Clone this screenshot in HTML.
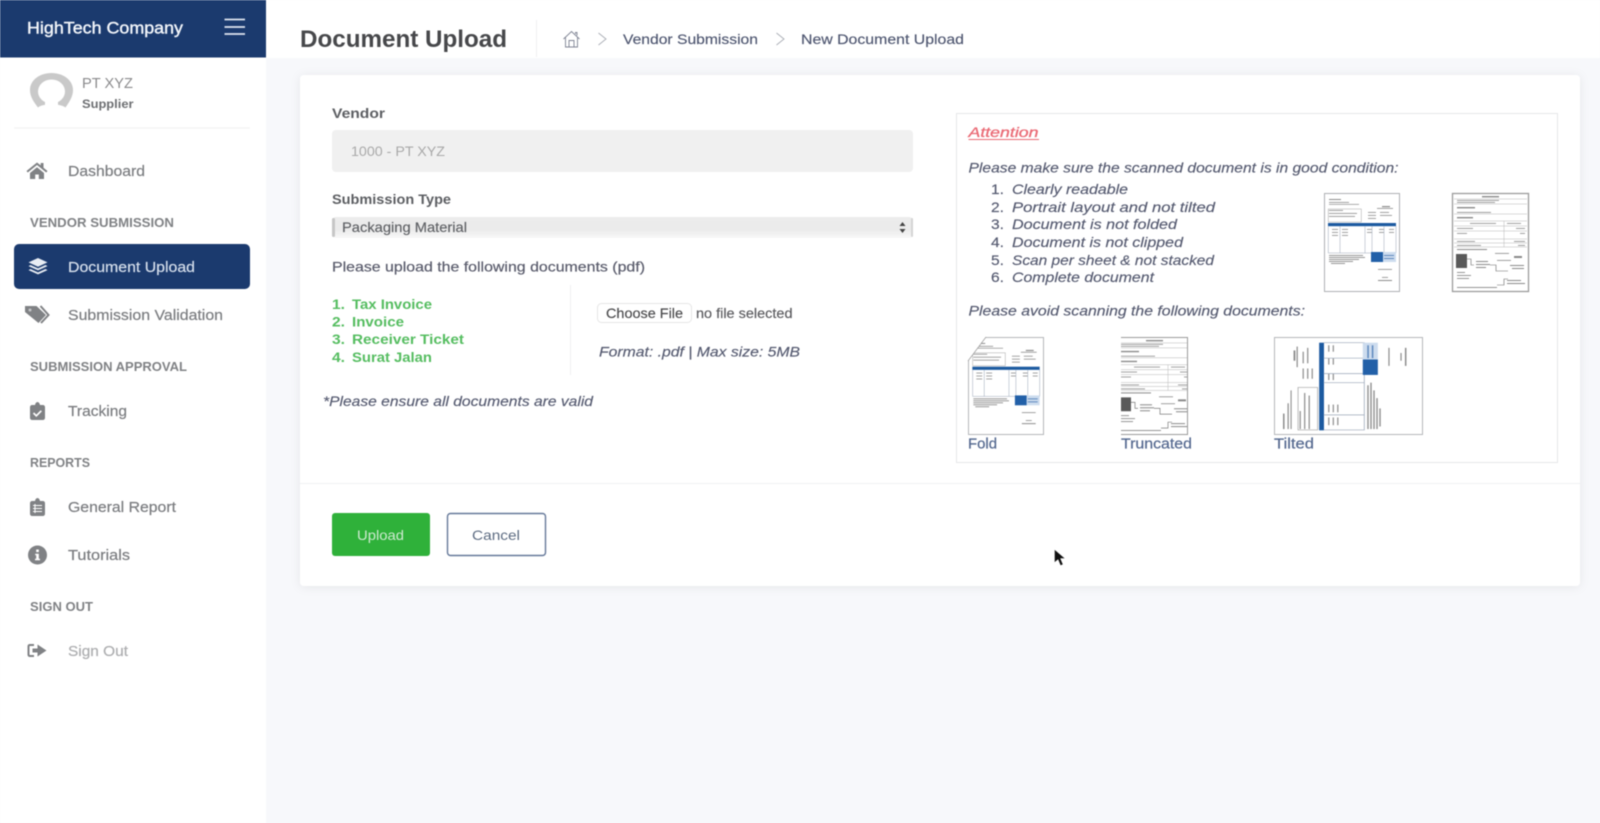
<!DOCTYPE html>
<html lang="en"><head><meta charset="utf-8"><title>Document Upload</title>
<style>
html,body{margin:0;padding:0;background:#f7f8fb;width:1600px;height:823px;overflow:hidden}
svg{display:block;filter:blur(.5px)}
svg svg{filter:none}
text{font-family:"Liberation Sans",sans-serif;font-size:14px;white-space:pre}
.nav{font-size:14.5px;fill:#7b7d80;stroke:#7b7d80;stroke-width:.2}
.sec{font-size:12.5px;font-weight:bold;fill:#808285}
.lab{font-weight:bold;font-size:13.5px;fill:#5d5f63}
.it{font-style:italic;fill:#555a70;font-size:14px;stroke:#555a70;stroke-width:.15}
.num{fill:#555a70;font-size:14px;stroke:#555a70;stroke-width:.15}
.gr{font-weight:bold;fill:#55bd60;font-size:13.5px}
.cr{font-size:14px;fill:#4e5670;stroke:#4e5670;stroke-width:.15}
.cap{font-size:14.5px;fill:#54688f;stroke:#54688f;stroke-width:.2}
.ic{fill:#808285}
</style></head>
<body>
<svg xmlns="http://www.w3.org/2000/svg" width="1600" height="823" viewBox="0 0 1600 823">
<defs>
<filter id="sh" x="-5%" y="-10%" width="110%" height="120%"><feDropShadow dx="0" dy="1" stdDeviation="5" flood-color="#000" flood-opacity=".07"/></filter>
<filter id="b" x="-3%" y="-3%" width="106%" height="106%"><feGaussianBlur stdDeviation=".3"/></filter>
<symbol id="inv" viewBox="0 0 76 99" overflow="visible">
<g fill="#8c8c8c">
<rect x="5" y="6" width="12" height="1"/><rect x="5" y="9" width="20" height=".8"/><rect x="5" y="11" width="30" height=".7"/>
<rect x="58" y="13" width="8" height="1.2"/><rect x="53" y="15" width="16" height=".8"/>
<rect x="5" y="17" width="14" height=".8"/><rect x="5" y="20" width="28" height=".8"/><rect x="5" y="23" width="26" height=".8"/>
<rect x="44" y="19" width="8" height=".8"/><rect x="56" y="19" width="9" height=".8"/><rect x="44" y="22" width="8" height=".8"/><rect x="56" y="22" width="12" height=".8"/><rect x="44" y="25" width="8" height=".8"/>
<rect x="8" y="36" width="6" height=".8"/><rect x="8" y="39" width="6" height=".8"/><rect x="8" y="42" width="6" height=".8"/><rect x="18" y="36" width="6" height=".8"/><rect x="18" y="39" width="6" height=".8"/><rect x="18" y="42" width="6" height=".8"/>
<rect x="43" y="36" width="5" height=".8"/><rect x="43" y="39" width="5" height=".8"/><rect x="55" y="36" width="5" height=".8"/><rect x="55" y="39" width="5" height=".8"/><rect x="65" y="36" width="5" height=".8"/><rect x="65" y="39" width="5" height=".8"/>
<rect x="5" y="62" width="34" height=".9"/><rect x="5" y="64" width="36" height=".9"/><rect x="5" y="66" width="30" height=".9"/><rect x="5" y="68" width="24" height=".9"/><rect x="7" y="70" width="14" height=".9"/>
<rect x="54" y="76" width="14" height=".8"/><rect x="58" y="84" width="6" height=".8"/><rect x="54" y="87" width="14" height="1"/>
</g>
<rect x="4" y="30" width="68" height="3.2" fill="#1f5aa0"/>
<rect x="4.3" y="16" width="33" height="13" fill="none" stroke="#a5a5a5" stroke-width=".5"/>
<path d="M4.3 33V60H72V33M16 33V60M41 33V60M48 33V60M60 33V60" fill="none" stroke="#9aa6b8" stroke-width=".5"/>
<rect x="47" y="59" width="12" height="10" fill="#2260a8"/><rect x="59" y="59" width="13" height="10" fill="#cddcee"/>
<rect x="60" y="62" width="10" height="1" fill="#5d88bd"/><rect x="60" y="65" width="10" height="1" fill="#5d88bd"/>
</symbol>
<symbol id="frm" viewBox="0 0 77 99" overflow="visible">
<g fill="#8a8a8a">
<rect x="30" y="3" width="17" height="1.4"/><rect x="5" y="7" width="42" height=".8"/><rect x="5" y="9" width="38" height=".8"/>
<rect x="5" y="14" width="18" height="1.4"/><rect x="5" y="19" width="34" height=".8"/><rect x="5" y="24" width="16" height="1.4"/>
<rect x="18" y="30" width="26" height=".8"/><rect x="55" y="30" width="14" height=".8"/>
<rect x="5" y="35" width="16" height=".8"/><rect x="64" y="35" width="9" height=".8"/>
<rect x="5" y="40" width="10" height=".8"/><rect x="68" y="40" width="5" height=".8"/><rect x="5" y="48" width="18" height=".8"/><rect x="62" y="48" width="11" height=".8"/><rect x="5" y="52" width="24" height=".8"/><rect x="66" y="52" width="7" height=".8"/>
<rect x="5" y="56" width="30" height="1"/>
<rect x="43" y="60" width="14" height=".8"/><rect x="62" y="63" width="8" height="2"/><rect x="45" y="67" width="14" height=".8"/><rect x="58" y="72" width="14" height="1"/><rect x="60" y="75" width="12" height="1"/>
<rect x="24" y="68" width="12" height="1"/><rect x="24" y="71" width="14" height="1"/><rect x="24" y="74" width="10" height="1"/>
<rect x="5" y="79" width="8" height=".9"/><rect x="5" y="82" width="14" height=".9"/><rect x="5" y="85" width="12" height=".9"/>
<rect x="55" y="87" width="14" height="1"/><rect x="55" y="90" width="18" height="1"/><rect x="5" y="94" width="40" height=".9"/>
</g>
<rect x="4" y="61" width="11" height="14" fill="#5a5a5a"/>
<path d="M2 6H75M2 11H75M2 21H75M2 28H75M2 33H75M2 38H75M2 46H75M2 50H75M2 54H75M52 28V54" stroke="#b5b5b5" stroke-width=".5" fill="none"/>
<path d="M15 66H19V72H22M38 72H44V78H56M45 92H52V86H56" stroke="#666" stroke-width=".6" fill="none"/>
</symbol>
</defs>

<!-- backgrounds -->
<rect width="1600" height="823" fill="#f7f8fb"/>
<rect width="266" height="823" fill="#fff"/>
<rect x="266" width="1334" height="58" fill="#fff"/>
<rect width="266" height="57.5" fill="#1b3a6e"/>

<!-- brand -->
<text x="27" y="33.5" textLength="156" lengthAdjust="spacingAndGlyphs" fill="#f2f5fa" stroke="#f2f5fa" stroke-width=".4" style="font-size:16.5px">HighTech Company</text>
<path d="M224.500 19.500H245M224.500 27H245M224.500 34H245" stroke="#dfe5ef" stroke-width="1.700" fill="none"/>

<!-- user -->
<path fill="#c9c9c9" d="M38 107.500C33 101 30 96 30 90C30 80 40 73 51.500 73C63 73 73 80 73 90C73 96 70 101 65.500 107.500C62 105 58 104.500 51.500 104.500C45 104.500 41 105 38 107.500Z"/>
<ellipse cx="51.500" cy="91.500" rx="13.500" ry="12" fill="#fff"/>
<rect x="45" y="101" width="13" height="5" fill="#fff"/>
<text x="82" y="88" textLength="51" lengthAdjust="spacingAndGlyphs" style="font-size:14.500px" fill="#8b8b8d">PT XYZ</text>
<text x="82" y="108" textLength="51.500" lengthAdjust="spacingAndGlyphs" style="font-size:12px;font-weight:bold" fill="#6d6f72">Supplier</text>
<rect x="14" y="127.500" width="236" height="1" fill="#f1f1f1"/>

<!-- nav -->
<path class="ic" d="M37 162.500L26.500 171l1.300 1.500L37 165l9.200 7.500 1.300-1.500-4-3.300V163h-2.800v2.400zM30 173v6h5.200v-4.500h3.600V179H44v-6l-7-5.800z"/>
<text class="nav" x="68" y="176" textLength="77" lengthAdjust="spacingAndGlyphs">Dashboard</text>
<text class="sec" x="30" y="227" textLength="144" lengthAdjust="spacingAndGlyphs">VENDOR SUBMISSION</text>

<rect x="14" y="244" width="236" height="45" rx="5" fill="#1b3a6e"/>
<path fill="#e8edf4" d="M38 258l9.500 4.400-9.500 4.400-9.500-4.400zM30.500 265l7.500 3.400 7.500-3.400 2 1.100-9.500 4.300-9.500-4.300zM30.500 269l7.500 3.400 7.500-3.400 2 1.100-9.500 4.300-9.500-4.300z"/>
<text x="68" y="272" textLength="127" lengthAdjust="spacingAndGlyphs" style="font-size:14.500px" fill="#d6dfec" stroke="#d6dfec" stroke-width=".2">Document Upload</text>

<path class="ic" d="M25 306h11.500l9.500 9-7.500 8-13.500-11z"/><circle cx="30" cy="310" r="1.500" fill="#c4c5c7"/><path d="M40.500 306l8 9-7.500 8" fill="none" stroke="#808285" stroke-width="2"/>
<text class="nav" x="68" y="320" textLength="155" lengthAdjust="spacingAndGlyphs">Submission Validation</text>
<text class="sec" x="30" y="371" textLength="157" lengthAdjust="spacingAndGlyphs">SUBMISSION APPROVAL</text>

<path class="ic" d="M32 405h3c.3-2 1.500-3 2.500-3s2.200 1 2.500 3h3c1 0 2 1 2 2v11c0 1-1 2-2 2H32c-1 0-2-1-2-2v-11c0-1 1-2 2-2z"/><path d="M33.500 413l2.800 2.800 5-5" stroke="#fff" stroke-width="1.700" fill="none"/>
<text class="nav" x="68" y="416" textLength="59" lengthAdjust="spacingAndGlyphs">Tracking</text>
<text class="sec" x="30" y="467" textLength="60" lengthAdjust="spacingAndGlyphs">REPORTS</text>

<path class="ic" d="M32 501h3c.3-2 1.500-3 2.500-3s2.200 1 2.500 3h3c1 0 2 1 2 2v11c0 1-1 2-2 2H32c-1 0-2-1-2-2v-11c0-1 1-2 2-2z"/><path d="M33 505.500h9M33 508.500h9M33 511.500h9M35 504v9" stroke="#fff" stroke-width="1" fill="none"/>
<text class="nav" x="68" y="512" textLength="108" lengthAdjust="spacingAndGlyphs">General Report</text>

<circle class="ic" cx="37.500" cy="555" r="9.500"/><rect x="36.200" y="549.500" width="2.600" height="2.600" fill="#fff"/><path d="M35.200 553.800h3.600v5h1.200v1.500h-5v-1.500h1.200v-3.500h-1z" fill="#fff"/>
<text class="nav" x="68" y="560" textLength="62" lengthAdjust="spacingAndGlyphs">Tutorials</text>
<text class="sec" x="30" y="611" textLength="63" lengthAdjust="spacingAndGlyphs">SIGN OUT</text>

<path d="M34 645h-4c-1 0-1.500.6-1.500 1.500v8c0 .9.5 1.500 1.500 1.500h4" fill="none" stroke="#808285" stroke-width="2"/><path class="ic" d="M32.500 648.500h5V644.500l9 6-9 6v-4h-5z"/>
<text class="nav" x="68" y="656" textLength="60" lengthAdjust="spacingAndGlyphs" style="fill:#adaeb0;stroke:#adaeb0">Sign Out</text>

<!-- topbar -->
<text x="300" y="47" textLength="207" lengthAdjust="spacingAndGlyphs" style="font-size:24px;font-weight:bold" fill="#47484b">Document Upload</text>
<rect x="536" y="20" width="1" height="37" fill="#f0f0f2"/>
<path d="M563.500 39L571.500 31.500 579.500 39M565.500 37.500V47H577.500V37.500M569 47V40.500H574V47M575.500 34V32.500H577V35.500" fill="none" stroke="#7f8494" stroke-width=".9"/>
<path d="M598.500 33L606 39 598.500 45" fill="none" stroke="#a8acb4" stroke-width=".9"/>
<text class="cr" x="623" y="44" textLength="135" lengthAdjust="spacingAndGlyphs">Vendor Submission</text>
<path d="M776.500 33L784 39 776.500 45" fill="none" stroke="#a8acb4" stroke-width=".9"/>
<text class="cr" x="801" y="44" textLength="163" lengthAdjust="spacingAndGlyphs">New Document Upload</text>

<!-- card -->
<rect x="300" y="75" width="1280" height="511" rx="4" fill="#fff" filter="url(#sh)"/>
<rect x="300" y="483" width="1280" height="1" fill="#f0f1f3"/>

<text class="lab" x="332" y="118" textLength="53" lengthAdjust="spacingAndGlyphs">Vendor</text>
<rect x="332" y="130" width="581" height="42" rx="4" fill="#f0f0f0"/>
<text x="351" y="156" textLength="94" lengthAdjust="spacingAndGlyphs" fill="#a9a9a9">1000 - PT XYZ</text>

<text class="lab" x="332" y="204" textLength="119" lengthAdjust="spacingAndGlyphs">Submission Type</text>
<linearGradient id="sel" x1="0" y1="0" x2="0" y2="1"><stop offset="0" stop-color="#ececec"/><stop offset=".6" stop-color="#ebebeb"/><stop offset="1" stop-color="#f8f8f8"/></linearGradient>
<rect x="332" y="217" width="581" height="21" rx="4" fill="url(#sel)"/>
<rect x="332" y="218" width="3" height="19" rx="1.500" fill="#c6c6c6"/>
<rect x="911" y="218" width="2" height="19" rx="1" fill="#d4d4d4"/>
<text x="342" y="232" textLength="125" lengthAdjust="spacingAndGlyphs" fill="#5f6165" stroke="#5f6165" stroke-width=".15">Packaging Material</text>
<path d="M902.500 222l3 4h-6zM902.500 233l3-4h-6z" fill="#444"/>

<text x="332" y="271.500" textLength="313" lengthAdjust="spacingAndGlyphs" fill="#5a5c6c" stroke="#5a5c6c" stroke-width=".2">Please upload the following documents (pdf)</text>

<text class="gr" x="332" y="309" textLength="13" lengthAdjust="spacingAndGlyphs">1.</text><text class="gr" x="352" y="309" textLength="80" lengthAdjust="spacingAndGlyphs">Tax Invoice</text>
<text class="gr" x="332" y="326.500" textLength="13" lengthAdjust="spacingAndGlyphs">2.</text><text class="gr" x="352" y="326.500" textLength="52" lengthAdjust="spacingAndGlyphs">Invoice</text>
<text class="gr" x="332" y="344" textLength="13" lengthAdjust="spacingAndGlyphs">3.</text><text class="gr" x="352" y="344" textLength="112" lengthAdjust="spacingAndGlyphs">Receiver Ticket</text>
<text class="gr" x="332" y="362" textLength="13" lengthAdjust="spacingAndGlyphs">4.</text><text class="gr" x="352" y="362" textLength="80" lengthAdjust="spacingAndGlyphs">Surat Jalan</text>
<rect x="570" y="285" width="1" height="90" fill="#f0f0f2"/>

<rect x="597.500" y="303.500" width="94" height="19" rx="4" fill="#fff" stroke="#e6e6e6"/>
<text x="606" y="318" textLength="77" lengthAdjust="spacingAndGlyphs" fill="#4a4a4c" stroke="#4a4a4c" stroke-width=".15">Choose File</text>
<text x="696" y="318" textLength="96.500" lengthAdjust="spacingAndGlyphs" fill="#5a5a5e" stroke="#5a5a5e" stroke-width=".15">no file selected</text>
<text class="it" x="599" y="356.500" textLength="201" lengthAdjust="spacingAndGlyphs">Format: .pdf | Max size: 5MB</text>
<text class="it" x="323" y="406" textLength="270" lengthAdjust="spacingAndGlyphs">*Please ensure all documents are valid</text>

<rect x="332" y="513" width="98" height="43" rx="3" fill="#2fb13a"/>
<text x="357" y="540" textLength="47" lengthAdjust="spacingAndGlyphs" fill="#cdeacf">Upload</text>
<rect x="447.500" y="513.500" width="98" height="42" rx="3" fill="#fff" stroke="#66799a" stroke-width="1.400"/>
<text x="472" y="540" textLength="48" lengthAdjust="spacingAndGlyphs" fill="#5d6c82">Cancel</text>

<!-- attention -->
<rect x="956.500" y="113.500" width="601" height="349" fill="#fff" stroke="#e6e7e9"/>
<text x="968.500" y="137" textLength="70" lengthAdjust="spacingAndGlyphs" style="font-style:italic;font-size:14px" fill="#ea6a75" stroke="#ea6a75" stroke-width=".3">Attention</text>
<rect x="968.500" y="139" width="70.500" height="1" fill="#ea6a75"/>
<text class="it" x="968.500" y="172.500" textLength="430" lengthAdjust="spacingAndGlyphs">Please make sure the scanned document is in good condition:</text>
<text class="num" x="991" y="194" textLength="13" lengthAdjust="spacingAndGlyphs">1.</text><text class="it" x="1012" y="194" textLength="116" lengthAdjust="spacingAndGlyphs">Clearly readable</text>
<text class="num" x="991" y="212" textLength="13" lengthAdjust="spacingAndGlyphs">2.</text><text class="it" x="1012" y="212" textLength="203" lengthAdjust="spacingAndGlyphs">Portrait layout and not tilted</text>
<text class="num" x="991" y="229" textLength="13" lengthAdjust="spacingAndGlyphs">3.</text><text class="it" x="1012" y="229" textLength="165" lengthAdjust="spacingAndGlyphs">Document is not folded</text>
<text class="num" x="991" y="247" textLength="13" lengthAdjust="spacingAndGlyphs">4.</text><text class="it" x="1012" y="247" textLength="171" lengthAdjust="spacingAndGlyphs">Document is not clipped</text>
<text class="num" x="991" y="265" textLength="13" lengthAdjust="spacingAndGlyphs">5.</text><text class="it" x="1012" y="265" textLength="202" lengthAdjust="spacingAndGlyphs">Scan per sheet &amp; not stacked</text>
<text class="num" x="991" y="282" textLength="13" lengthAdjust="spacingAndGlyphs">6.</text><text class="it" x="1012" y="282" textLength="142" lengthAdjust="spacingAndGlyphs">Complete document</text>
<text class="it" x="968.500" y="315.500" textLength="336.500" lengthAdjust="spacingAndGlyphs">Please avoid scanning the following documents:</text>

<!-- good samples -->
<g filter="url(#b)">
<rect x="1324.500" y="193.500" width="75" height="98" fill="#fff" stroke="#aeb0b3"/>
<use href="#inv" x="1324" y="193" width="76" height="99"/>
<rect x="1452.500" y="193.500" width="76" height="98" fill="#fff" stroke="#9b9b9b" stroke-width="1.300"/>
<use href="#frm" x="1452" y="193" width="77" height="99"/>
</g>

<!-- bad samples -->
<g filter="url(#b)">
<rect x="968.500" y="337.500" width="75" height="97" fill="#fff" stroke="#b5b7ba"/>
<use href="#inv" x="968" y="337" width="76" height="98"/>
<path d="M968 337H986L968 361Z" fill="#fff"/><path d="M986 337L968 361" stroke="#9b9b9b" stroke-width=".7"/>
<svg x="1121" y="337" width="67" height="98" viewBox="5 0 67 99" preserveAspectRatio="none"><use href="#frm" x="0" y="0" width="77" height="99"/></svg>
<path d="M1121 337.500H1188M1187.500 337V435M1121 434.500H1188" stroke="#9b9b9b" stroke-width="1" fill="none"/>
<rect x="1274.500" y="337.500" width="148" height="97" fill="#fff" stroke="#b5b7ba"/>
<g transform="translate(1274 435.500) rotate(-90) scale(1.289 1.505)"><use href="#inv" x="0" y="0" width="76" height="99"/></g>
</g>

<text class="cap" x="968" y="448.500" textLength="29" lengthAdjust="spacingAndGlyphs">Fold</text>
<text class="cap" x="1121" y="448.500" textLength="71" lengthAdjust="spacingAndGlyphs">Truncated</text>
<text class="cap" x="1274" y="448.500" textLength="40" lengthAdjust="spacingAndGlyphs">Tilted</text>

<!-- cursor -->
<path d="M1054.500 549.500V562.500L1058 559.500L1060.500 565.500L1063 564.500L1060.500 558.500H1065Z" fill="#111" stroke="#fff" stroke-width=".4"/>
</svg>
</body></html>
